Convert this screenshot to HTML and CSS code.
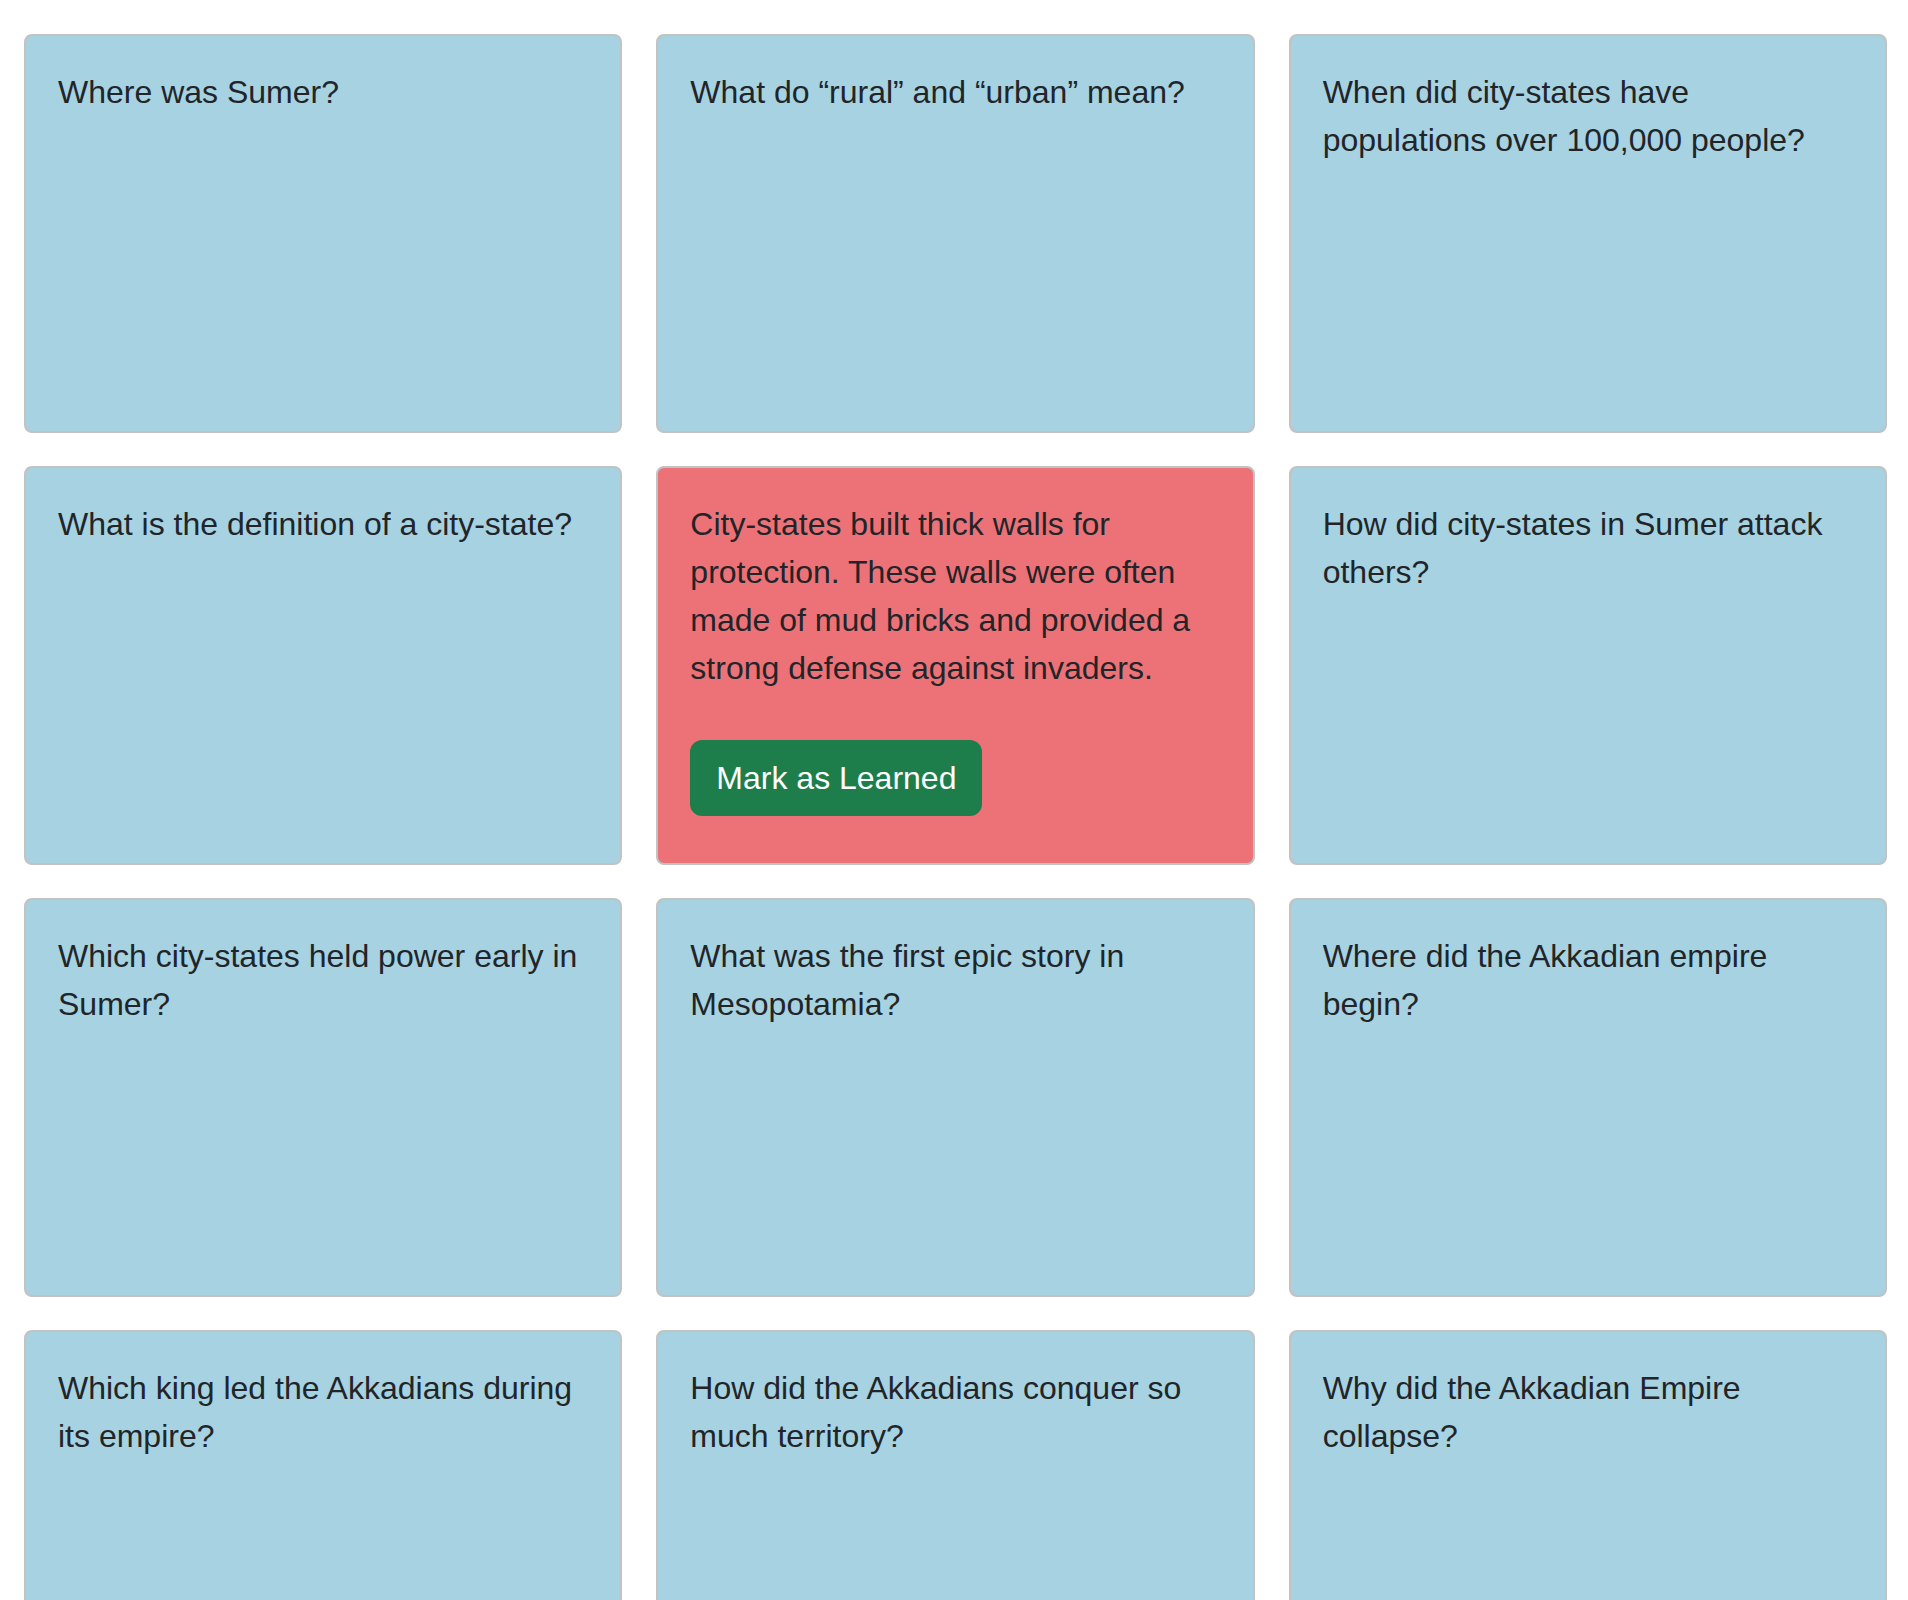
FILE: index.html
```html
<!DOCTYPE html>
<html lang="en">
<head>
<meta charset="utf-8">
<title>Flashcards</title>
<link rel="stylesheet" href="styles.css">
</head>
<body>
<main class="grid">
  <div class="card"><p class="card-text">Where was Sumer?</p></div>
  <div class="card"><p class="card-text">What do “rural” and “urban” mean?</p></div>
  <div class="card"><p class="card-text">When did city-states have populations over 100,000 people?</p></div>

  <div class="card"><p class="card-text">What is the definition of a city-state?</p></div>
  <div class="card card-flipped">
    <p class="card-text answer">City-states built thick walls for protection. These walls were often made of mud bricks and provided a strong defense against invaders.</p>
    <button class="btn-learned" type="button">Mark as Learned</button>
  </div>
  <div class="card"><p class="card-text">How did city-states in Sumer attack others?</p></div>

  <div class="card"><p class="card-text">Which city-states held power early in Sumer?</p></div>
  <div class="card"><p class="card-text">What was the first epic story in Mesopotamia?</p></div>
  <div class="card"><p class="card-text">Where did the Akkadian empire begin?</p></div>

  <div class="card"><p class="card-text">Which king led the Akkadians during its empire?</p></div>
  <div class="card"><p class="card-text">How did the Akkadians conquer so much territory?</p></div>
  <div class="card"><p class="card-text">Why did the Akkadian Empire collapse?</p></div>
</main>
</body>
</html>
```

FILE: styles.css
```css
html, body {
  margin: 0;
  padding: 0;
  background: #ffffff;
}

body {
  font-family: "Liberation Sans", Arial, Helvetica, sans-serif;
  font-size: 32px;
  line-height: 48px;
  color: #212529;
}

.grid {
  display: grid;
  grid-template-columns: repeat(3, 1fr);
  column-gap: 34px;
  row-gap: 33px;
  padding: 34px 21px 40px 24px;
}

.card {
  box-sizing: border-box;
  height: 399px;
  background: #a6d2e1;
  border: 2px solid #c2c2c2;
  border-radius: 8px;
  padding: 32px;
  display: flex;
  flex-direction: column;
  align-items: flex-start;
}

.card-flipped {
  background: #ed7277;
}

.card-text {
  margin: 0;
}

.card-text.answer {
  margin-bottom: 48px;
}

.btn-learned {
  font-family: "Liberation Sans", Arial, Helvetica, sans-serif;
  font-size: 32px;
  line-height: 48px;
  color: #ffffff;
  background: #1e7e4b;
  border: 2px solid #1e7e4b;
  border-radius: 12px;
  padding: 12px 24px;
  height: 76px;
  cursor: pointer;
}
```
